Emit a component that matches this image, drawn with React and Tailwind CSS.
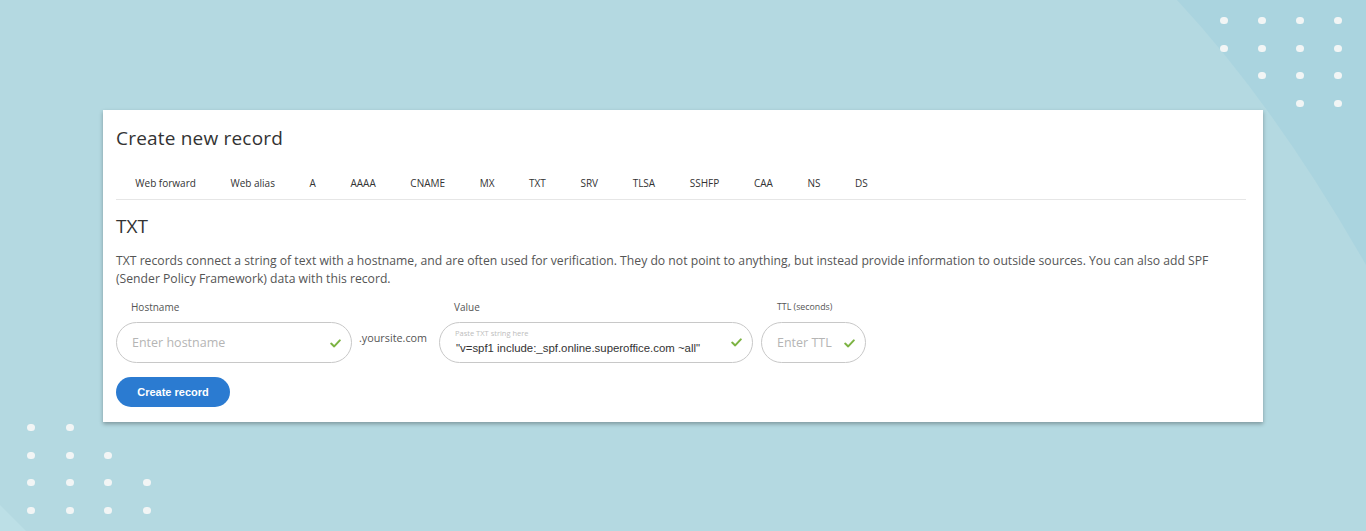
import React from "react";

const tabs = ["Web forward", "Web alias", "A", "AAAA", "CNAME", "MX", "TXT", "SRV", "TLSA", "SSHFP", "CAA", "NS", "DS"];

function Check() {
  return (
    <svg width="11" height="9" viewBox="0 0 11 9" className="shrink-0">
      <path d="M1.2 4.6 L4.2 7.4 L9.8 1.4" fill="none" stroke="#7cb342" strokeWidth="2" strokeLinecap="round" strokeLinejoin="round" />
    </svg>
  );
}

function Dots({ rows, gapX, gapY }) {
  return (
    <div className="flex flex-col" style={{ rowGap: gapY }}>
      {rows.map((row, i) => (
        <div key={i} className="flex" style={{ columnGap: gapX }}>
          {row.map((on, j) => (
            <span key={j} className={"block w-[8px] h-[7px] rounded-full " + (on ? "bg-[#f2f5f5]" : "bg-transparent")} />
          ))}
        </div>
      ))}
    </div>
  );
}

export default function App() {
  return (
    <div className="relative min-h-[531px] w-full overflow-hidden bg-[#b4d9e1] font-['Open_Sans',sans-serif]">
      {/* background shapes */}
      <svg className="absolute inset-0 pointer-events-none" width="1366" height="531" viewBox="0 0 1366 531">
        <path d="M1177 0 Q1275 105 1366 265 L1366 0 Z" fill="#aad4df" />
        <path d="M0 505 L0 531 L26 531 Z" fill="#bcdfe6" />
      </svg>
      <div className="absolute left-[1220px] top-[17px]">
        <Dots gapX="30px" gapY="20.7px" rows={[[1, 1, 1, 1], [1, 1, 1, 1], [0, 1, 1, 1], [0, 0, 1, 1]]} />
      </div>
      <div className="absolute left-[27px] top-[424px]">
        <Dots gapX="30.5px" gapY="20.7px" rows={[[1, 1, 0, 0], [1, 1, 1, 0], [1, 1, 1, 1], [1, 1, 1, 1]]} />
      </div>

      <div className="relative pt-[110px] pl-[103px]">
        <div className="w-[1160px] bg-white shadow-[0_2px_4px_rgba(0,0,0,0.3)] pt-[16px] pl-[13px] pr-[17px] pb-[15px] text-[#333]">
          <h1 className="text-[19px] leading-[24px] text-[#333] tracking-[0.2px]">Create new record</h1>

          <div className="mt-[18px] flex pl-[2px] border-b border-[#e6e6e6] pt-[7px] pb-[8px]">
            {tabs.map((t) => (
              <span key={t} className="px-[17.3px] text-[10px] leading-[16px] text-[#333]">{t}</span>
            ))}
          </div>

          <h2 className="mt-[14px] text-[19px] leading-[24px] text-[#333]">TXT</h2>
          <p className="mt-[14px] text-[12.2px] leading-[18px] text-[#555]">
            TXT records connect a string of text with a hostname, and are often used for verification. They do not point to anything, but instead provide information to outside sources. You can also add SPF (Sender Policy Framework) data with this record.
          </p>

          <div className="mt-[12px] flex items-start">
            <div className="flex flex-col w-[236px] shrink-0">
              <label className="pl-[15px] text-[10px] leading-[14px] text-[#555]">Hostname</label>
              <div className="mt-[8px] h-[41px] rounded-full border border-[#c8c8c8] flex items-center pl-[15px] pr-[10px] pt-[2px]">
                <span className="flex-1 text-[12.5px] text-[#b5b5b5]">Enter hostname</span>
                <Check />
              </div>
            </div>
            <span className="w-[87px] shrink-0 pl-[7px] mt-[30px] text-[10.8px] leading-[16px] text-[#555]">.yoursite.com</span>

            <div className="flex flex-col w-[314px] shrink-0">
              <label className="pl-[15px] text-[10px] leading-[14px] text-[#555]">Value</label>
              <div className="mt-[8px] h-[41px] rounded-full border border-[#c8c8c8] flex items-center pl-[15px] pr-[10px]">
                <div className="flex-1 flex flex-col">
                  <span className="text-[7.5px] leading-[10px] text-[#bdbdbd] -mt-[2px]">Paste TXT string here</span>
                  <span className="mt-[3px] pl-[1px] whitespace-nowrap font-['Liberation_Sans',Arial,sans-serif] text-[11.4px] leading-[15px] text-[#333]">"v=spf1 include:_spf.online.superoffice.com ~all"</span>
                </div>
                <Check />
              </div>
            </div>

            <div className="ml-[8px] flex flex-col w-[105px] shrink-0">
              <label className="pl-[16px] whitespace-nowrap text-[8.8px] leading-[14px] text-[#555]">TTL (seconds)</label>
              <div className="mt-[8px] h-[41px] rounded-full border border-[#c8c8c8] flex items-center pl-[15px] pr-[10px] pt-[2px]">
                <span className="flex-1 text-[12.5px] text-[#b5b5b5]">Enter TTL</span>
                <Check />
              </div>
            </div>
          </div>

          <button className="mt-[14px] h-[30px] w-[114px] rounded-full bg-[#2b7bd1] text-white text-[11px] font-bold font-['Liberation_Sans',Arial,sans-serif]">
            Create record
          </button>
        </div>
      </div>
    </div>
  );
}
